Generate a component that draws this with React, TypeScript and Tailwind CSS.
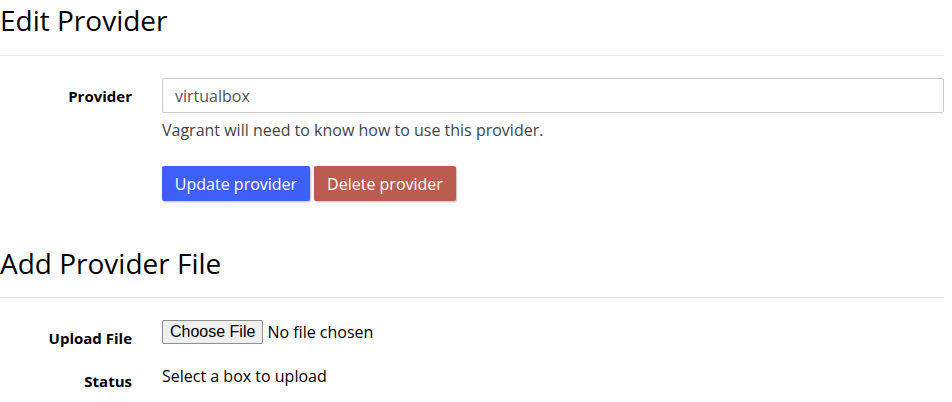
import React from "react";

const sans = "font-['Open_Sans',_'Liberation_Sans',_sans-serif]";

function FormRow({ label, children, labelClass = "" }: { label: string; children: React.ReactNode; labelClass?: string }) {
  return (
    <div className="flex">
      <div className={`w-[132px] shrink-0 text-right text-[15px] font-bold text-black ${labelClass}`}>{label}</div>
      <div className="ml-[30px] flex-1 min-w-0">{children}</div>
    </div>
  );
}

export default function App() {
  return (
    <div className={`${sans} bg-white w-[952px] h-[402px] overflow-hidden text-[#333]`}>
      <div className="w-[944px]">
        <h2 className="text-[28px] leading-[34px] text-black pt-[3px]">Edit Provider</h2>
        <div className="mt-[18px] border-t border-[#e8e8e8]" />

        <div className="mt-[22px]">
          <FormRow label="Provider" labelClass="pt-[7px]">
            <div className="h-[35px] border border-[#ccc] rounded-[2px] px-[12px] flex items-center text-[16px] text-[#555]">
              virtualbox
            </div>
            <p className="mt-[6px] text-[16px] leading-[22px] text-[#444]">Vagrant will need to know how to use this provider.</p>
            <div className="mt-[25px] flex gap-[4px]">
              <button className="h-[35px] w-[148px] rounded-[2px] bg-[#3f5ffb] text-white text-[16px] shadow-[1px_1px_2px_rgba(0,0,0,0.25)]">
                Update provider
              </button>
              <button className="h-[35px] w-[142px] rounded-[2px] bg-[#bb5c50] text-white text-[16px] shadow-[1px_1px_2px_rgba(0,0,0,0.25)]">
                Delete provider
              </button>
            </div>
          </FormRow>
        </div>

        <h2 className="mt-[45px] text-[28px] leading-[34px] text-black">Add Provider File</h2>
        <div className="mt-[17px] border-t border-[#e8e8e8]" />

        <div className="mt-[22px] flex flex-col gap-[14px]">
          <FormRow label="Upload File" labelClass="pt-[7px]">
            <div className="flex items-center text-[16px] text-black">
              <span className="h-[24px] px-[7px] flex items-center bg-[#efefef] border border-[#8f8f8f] rounded-[2px] font-['Liberation_Sans',_Arial,_sans-serif] text-[16px] text-black">
                Choose File
              </span>
              <span className="ml-[4px]">No file chosen</span>
            </div>
          </FormRow>
          <FormRow label="Status" labelClass="pt-[6px]">
            <div className="text-[16px] text-black">Select a box to upload</div>
          </FormRow>
        </div>
      </div>
    </div>
  );
}
